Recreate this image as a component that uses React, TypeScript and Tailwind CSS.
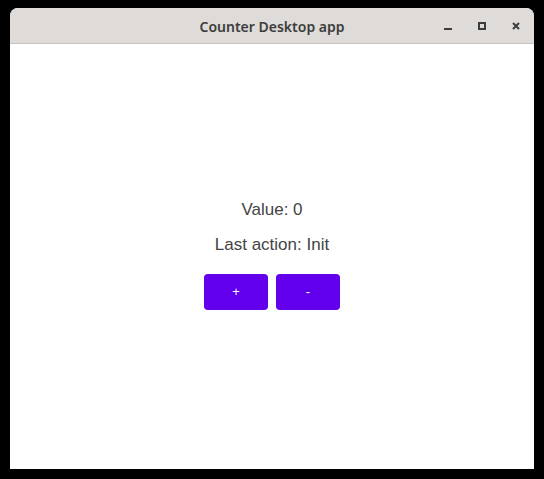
import React, { useState } from "react";

export default function App() {
  const [value, setValue] = useState(0);
  const [last, setLast] = useState("Init");
  return (
    <div className="w-[544px] h-[479px] bg-black pt-[8px] pl-[10px]">
      <div className="w-[524px] h-[461px] flex flex-col bg-white rounded-t-[8px] overflow-hidden">
        <div className="h-[36px] shrink-0 bg-[#dedbd8] border-b border-[#c5c2be] relative flex items-center justify-center">
          <span
            className="text-[14px] font-semibold text-[#3d3d3d] mt-[1px]"
            style={{ fontFamily: "'Noto Sans', 'Open Sans', sans-serif" }}
          >
            Counter Desktop app
          </span>
          <div className="absolute right-[14px] top-[14px] flex items-center gap-[26px]">
            <svg width="8" height="8" viewBox="0 0 8 8">
              <rect x="0" y="6" width="8" height="2" fill="#3d3d3d" />
            </svg>
            <svg width="8" height="8" viewBox="0 0 8 8">
              <rect x="1" y="1" width="6" height="6" fill="none" stroke="#3d3d3d" strokeWidth="2" />
            </svg>
            <svg width="8" height="8" viewBox="0 0 8 8">
              <path d="M1 1 L7 7 M7 1 L1 7" stroke="#3d3d3d" strokeWidth="2" />
            </svg>
          </div>
        </div>
        <div
          className="flex-1 flex flex-col items-center justify-center text-[#444] pb-[3px]"
          style={{ fontFamily: "'Liberation Sans', Arial, sans-serif" }}
        >
          <div className="text-[17px] leading-[19px]">Value: {value}</div>
          <div className="text-[17px] leading-[19px] mt-[16px]">Last action: {last}</div>
          <div className="flex gap-[8px] mt-[20px]">
            <button
              onClick={() => {
                setValue(value + 1);
                setLast("Increment");
              }}
              className="w-[64px] h-[36px] bg-[#6200ee] text-white text-[13px] font-medium rounded-[4px] flex items-center justify-center"
            >
              +
            </button>
            <button
              onClick={() => {
                setValue(value - 1);
                setLast("Decrement");
              }}
              className="w-[64px] h-[36px] bg-[#6200ee] text-white text-[13px] font-medium rounded-[4px] flex items-center justify-center"
            >
              -
            </button>
          </div>
        </div>
      </div>
    </div>
  );
}
